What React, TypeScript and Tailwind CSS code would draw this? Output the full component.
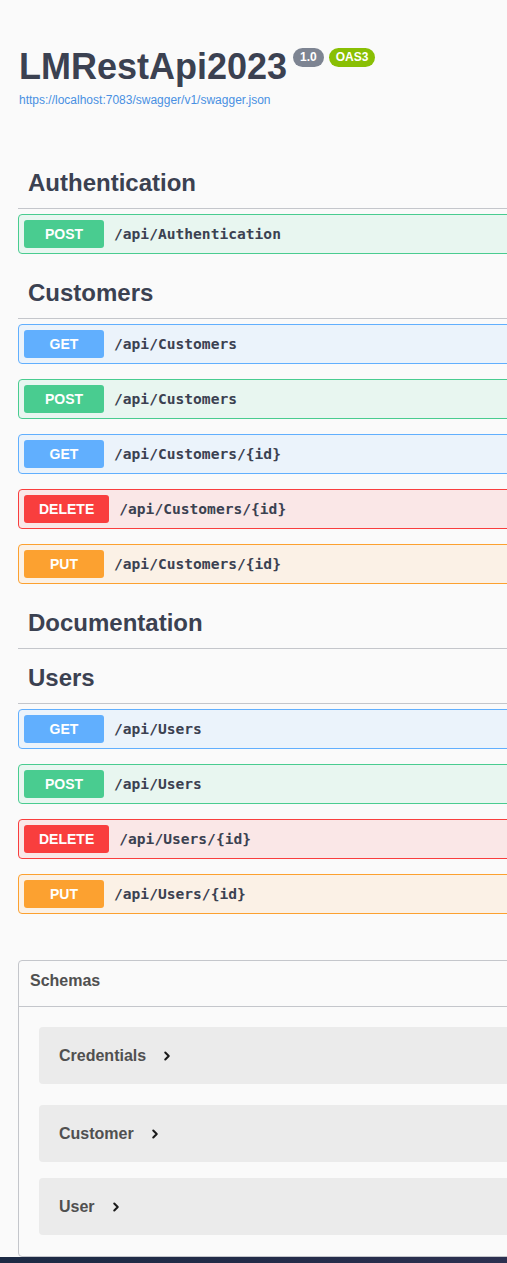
import { ChevronRight } from "lucide-react";

type Method = "GET" | "POST" | "PUT" | "DELETE";

const methodStyles: Record<Method, { block: string; badge: string }> = {
  GET: { block: "border-[#61affe] bg-[#ebf3fb]", badge: "bg-[#61affe]" },
  POST: { block: "border-[#49cc90] bg-[#e8f6f0]", badge: "bg-[#49cc90]" },
  PUT: { block: "border-[#fca130] bg-[#fbf1e6]", badge: "bg-[#fca130]" },
  DELETE: { block: "border-[#f93e3e] bg-[#fae7e7]", badge: "bg-[#f93e3e]" },
};

const tags: { name: string; ops: { method: Method; path: string }[] }[] = [
  { name: "Authentication", ops: [{ method: "POST", path: "/api/Authentication" }] },
  {
    name: "Customers",
    ops: [
      { method: "GET", path: "/api/Customers" },
      { method: "POST", path: "/api/Customers" },
      { method: "GET", path: "/api/Customers/{id}" },
      { method: "DELETE", path: "/api/Customers/{id}" },
      { method: "PUT", path: "/api/Customers/{id}" },
    ],
  },
  { name: "Documentation", ops: [] },
  {
    name: "Users",
    ops: [
      { method: "GET", path: "/api/Users" },
      { method: "POST", path: "/api/Users" },
      { method: "DELETE", path: "/api/Users/{id}" },
      { method: "PUT", path: "/api/Users/{id}" },
    ],
  },
];

const schemas = [
  { name: "Credentials", mt: "mt-[20px]" },
  { name: "Customer", mt: "mt-[21px]" },
  { name: "User", mt: "mt-[16px]" },
];

function OpBlock({ method, path }: { method: Method; path: string }) {
  const s = methodStyles[method];
  return (
    <div className={`mb-[15px] flex h-[40px] items-center rounded-[4px] border px-[5px] ${s.block}`}>
      <span
        className={`flex h-[28px] min-w-[80px] items-center justify-center rounded-[3px] px-[15px] text-[14px] font-bold text-white ${s.badge}`}
      >
        {method}
      </span>
      <span className="ml-[10px] font-['DejaVu_Sans_Mono',monospace] text-[14.6px] font-bold text-[#3b4151]">
        {path}
      </span>
    </div>
  );
}

export default function App() {
  return (
    <div className="h-[1263px] w-full overflow-hidden bg-[#fafafa] font-['Liberation_Sans',Arial,sans-serif]">
      <div className="w-[640px] pl-[18px]">
        {/* Info */}
        <div className="pl-[1px] pt-[47px]">
          <div className="flex items-start">
            <h2 className="text-[36px] leading-[40px] font-bold text-[#3b4151]">LMRestApi2023</h2>
            <span className="ml-[6px] mt-[1px] rounded-[57px] bg-[#7d8492] px-[7px] py-[2px] text-[12px] font-bold leading-[15px] text-white">
              1.0
            </span>
            <span className="ml-[5px] mt-[1px] rounded-[57px] bg-[#89bf04] px-[7px] py-[2px] text-[12px] font-bold leading-[15px] text-white">
              OAS3
            </span>
          </div>
          <a className="mt-[6px] block text-[12px] leading-[15px] text-[#4990e2]">
            https://localhost:7083/swagger/v1/swagger.json
          </a>
        </div>

        {/* Tags */}
        <div className="mt-[51px]">
          {tags.map((tag) => (
            <div key={tag.name}>
              <div className="mb-[5px] flex h-[50px] items-center border-b border-[#c4c6cb] pb-[2px] pl-[10px] text-[24px] font-bold text-[#3b4151]">
                {tag.name}
              </div>
              {tag.ops.map((op, i) => (
                <OpBlock key={i} method={op.method} path={op.path} />
              ))}
            </div>
          ))}
        </div>

        {/* Schemas */}
        <div className="mt-[46px] h-[297px] rounded-[4px] border border-[#c4c6cb]">
          <div className="flex h-[46px] items-center border-b border-[#c4c6cb] pb-[6px] pl-[11px] text-[16px] font-bold text-[#505050]">
            Schemas
          </div>
          <div className="pl-[20px]">
            {schemas.map((m) => (
              <div
                key={m.name}
                className={`${m.mt} flex h-[57px] items-center rounded-[4px] bg-[#ebebeb] pl-[20px] text-[16px] font-bold text-[#505050]`}
              >
                {m.name}
                <ChevronRight className="ml-[14px] h-[14px] w-[14px] text-[#1a1a1a]" strokeWidth={3.5} />
              </div>
            ))}
          </div>
        </div>
      </div>
      <div className="h-[6px] w-full bg-gradient-to-r from-[#1c2a44] via-[#222b48] to-[#2c3050]" />
    </div>
  );
}
